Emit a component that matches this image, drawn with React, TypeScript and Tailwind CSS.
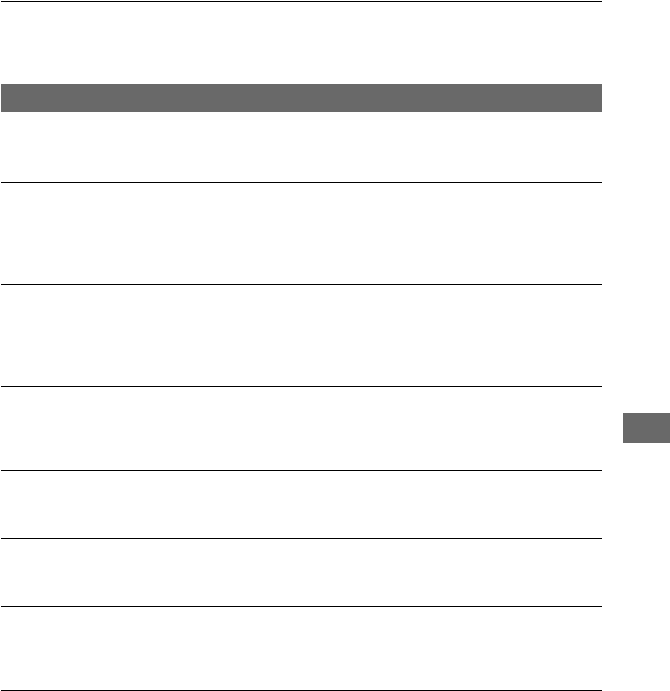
import React from 'react';

const Rule: React.FC = () => <div className="h-px bg-black" />;

const App: React.FC = () => {
  return (
    <div className="bg-white w-[670px] h-[691px] flex overflow-hidden">
      {/* PAGE BODY */}
      <div className="w-[601px] ml-px pt-px flex flex-col">
        <Rule />
        <div className="h-[82px]" />
        <div className="h-[28px] bg-[#696969]" />
        <div className="h-[70px]" />
        <Rule />
        <div className="h-[101px]" />
        <Rule />
        <div className="h-[101px]" />
        <Rule />
        <div className="h-[83px]" />
        <Rule />
        <div className="h-[67px]" />
        <Rule />
        <div className="h-[67px]" />
        <Rule />
        <div className="h-[83px]" />
        <Rule />
      </div>

      {/* SIDE TAB */}
      <div className="flex-1 pt-[413px] pl-[21px]">
        <div className="h-[30px] bg-[#696969]" />
      </div>
    </div>
  );
};

export default App;
